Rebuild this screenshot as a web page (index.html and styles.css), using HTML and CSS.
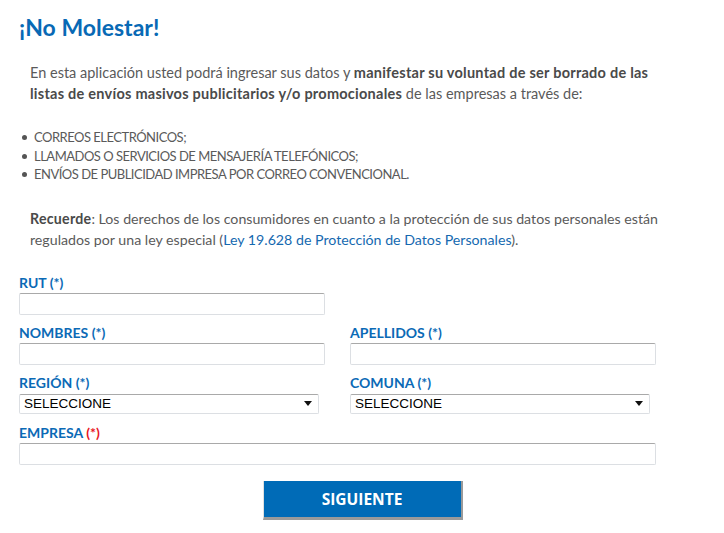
FILE: index.html
```html
<!DOCTYPE html>
<html lang="es">
<head>
<meta charset="utf-8">
<title>¡No Molestar!</title>
<link rel="stylesheet" href="styles.css">
</head>
<body>
<div class="page">
  <h1 class="title">¡No Molestar!</h1>
  <p class="intro">En esta aplicación usted podrá ingresar sus datos y <strong>manifestar su voluntad de ser borrado de las listas de envíos masivos publicitarios y/o promocionales</strong> de las empresas a través de:</p>
  <ul class="channels">
    <li>CORREOS ELECTRÓNICOS;</li>
    <li>LLAMADOS O SERVICIOS DE MENSAJERÍA TELEFÓNICOS;</li>
    <li>ENVÍOS DE PUBLICIDAD IMPRESA POR CORREO CONVENCIONAL.</li>
  </ul>
  <p class="intro remember"><strong>Recuerde</strong>: Los derechos de los consumidores en cuanto a la protección de sus datos personales están regulados por una ley especial (<a class="link" href="#">Ley 19.628 de Protección de Datos Personales</a>).</p>

  <form class="form">
    <div class="field">
      <label class="label">RUT (*)</label>
      <input class="input" type="text">
    </div>
    <div class="field"></div>
    <div class="field">
      <label class="label">NOMBRES (*)</label>
      <input class="input" type="text">
    </div>
    <div class="field">
      <label class="label">APELLIDOS (*)</label>
      <input class="input" type="text">
    </div>
    <div class="field sel">
      <label class="label">REGIÓN (*)</label>
      <div class="select"><span>SELECCIONE</span><span class="caret"></span></div>
    </div>
    <div class="field sel">
      <label class="label">COMUNA (*)</label>
      <div class="select"><span>SELECCIONE</span><span class="caret"></span></div>
    </div>
    <div class="field wide">
      <label class="label">EMPRESA <span class="req">(*)</span></label>
      <input class="input" type="text">
    </div>
  </form>
  <div class="actions">
    <button class="btn" type="button">SIGUIENTE</button>
  </div>
</div>
</body>
</html>
```

FILE: styles.css
```css
html, body {
  margin: 0;
  padding: 0;
  background: #ffffff;
}
body {
  font-family: Lato, "Open Sans", sans-serif;
  color: #555555;
}
.page {
  width: 724px;
  padding: 12px 0 0 0;
  box-sizing: border-box;
}
.title {
  margin: 0 0 0 19px;
  font-size: 23px;
  line-height: 30px;
  font-weight: 700;
  color: #0869b5;
}
.intro {
  margin: 20px 0 0 30px;
  width: 650px;
  font-size: 14.5px;
  line-height: 21px;
  color: #5a5a5a;
}
.intro strong {
  color: #4a4a4a;
  font-weight: 700;
  letter-spacing: 0.25px;
}
.channels {
  margin: 24px 0 0 0;
  padding: 0 0 0 34px;
  font-size: 13px;
  letter-spacing: -0.5px;
  line-height: 18.5px;
  font-weight: 400;
  color: #5a5a5a;
  list-style: none;
}
.channels li {
  position: relative;
}
.channels li::before {
  content: "";
  position: absolute;
  left: -12px;
  top: 7px;
  width: 5px;
  height: 5px;
  border-radius: 50%;
  background: #555;
}
.remember {
  margin-top: 24px;
  width: 660px;
  font-size: 14.2px;
}
.link {
  color: #1569b0;
  text-decoration: none;
}
.form {
  margin: 25px 0 0 19px;
  display: grid;
  grid-template-columns: 306px 306px;
  column-gap: 25px;
}
.field {
  display: flex;
  flex-direction: column;
  height: 50px;
}
.field.wide {
  grid-column: 1 / 3;
}
.label {
  font-size: 14px;
  line-height: 16px;
  font-weight: 700;
  color: #0b6ab6;
  margin-bottom: 2px;
}
.req {
  color: #e8141e;
}
.input {
  box-sizing: border-box;
  height: 22px;
  width: 100%;
  margin: 0;
  border: 1px solid #dcdfe3;
  border-top-color: #a9a9a9;
  border-radius: 2px;
  background: #fff;
  padding: 0 4px;
}
.field.sel .label {
  margin-bottom: 3px;
}
.select {
  box-sizing: border-box;
  width: 300px;
  height: 20px;
  border: 1px solid #dcdfe3;
  border-top-color: #a9a9a9;
  border-radius: 2px;
  display: flex;
  align-items: center;
  justify-content: space-between;
  padding: 0 6px 0 4px;
  font-family: "Liberation Sans", Arial, sans-serif;
  font-size: 13.5px;
  color: #000;
}
.caret {
  width: 0;
  height: 0;
  border-left: 4px solid transparent;
  border-right: 4px solid transparent;
  border-top: 5px solid #111;
}
.actions {
  display: flex;
  justify-content: center;
  padding-top: 6px;
}
.btn {
  box-sizing: border-box;
  width: 200px;
  height: 39px;
  margin-left: 1px;
  background: #006bb7;
  color: #ffffff;
  border: none;
  border-left: 1px solid #e0e0e0;
  border-right: 2px solid #9a9a9a;
  border-bottom: 3px solid #9a9a9a;
  font-family: "Open Sans", sans-serif;
  font-weight: 700;
  font-size: 15.5px;
  padding: 0;
}
```
